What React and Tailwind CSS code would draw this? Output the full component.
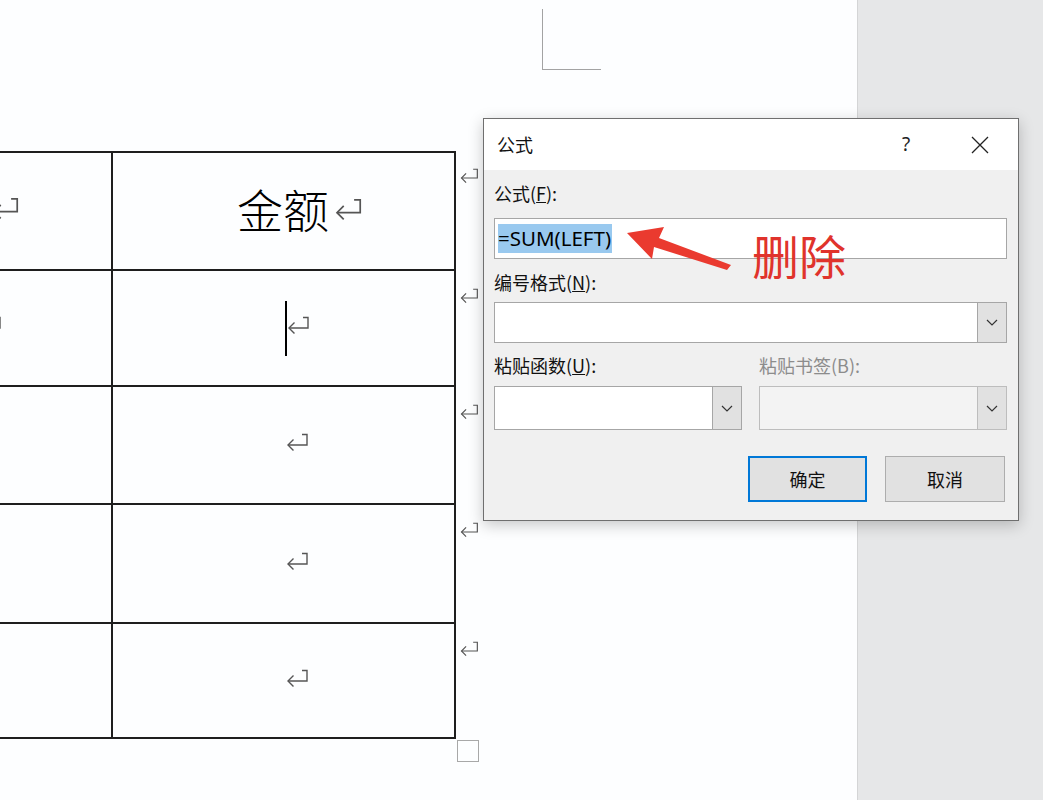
import React from "react";

const cjk = { fontFamily: "'Noto Sans CJK SC', 'Noto Sans', sans-serif" };
const ui = { fontFamily: "'Noto Sans', 'Noto Sans CJK SC', sans-serif" };

// Word paragraph mark
const Mark = ({ w = 24, h = 18, className = "" }) => (
  <svg width={w} height={h} viewBox="0 0 24 18" className={`shrink-0 ${className}`}>
    <path d="M17 1.5 H22 V12 H3" fill="none" stroke="#555" strokeWidth="1.4" />
    <path d="M8.5 6.5 L3 12 L8.5 17.5" fill="none" stroke="#555" strokeWidth="1.4" />
  </svg>
);

const Chevron = () => (
  <svg width="12" height="7" viewBox="0 0 12 7">
    <path d="M1 1 L6 6 L11 1" fill="none" stroke="#333" strokeWidth="1.2" />
  </svg>
);

const Select = ({ disabled = false }) => (
  <div className={`h-full flex border ${disabled ? "border-[#bdbdbd] bg-[#f3f3f3]" : "border-[#a6a6a6] bg-white"}`}>
    <div className="flex-1" />
    <div className={`w-[29px] flex items-center justify-center border-l bg-[#e1e1e1] ${disabled ? "border-[#bdbdbd]" : "border-[#a6a6a6]"}`}>
      <Chevron />
    </div>
  </div>
);

const rows = [
  { h: "h-[116px]" },
  { h: "h-[118px]" },
  { h: "h-[119px]" },
  { h: "h-[115px]" },
];

export default function App() {
  return (
    <div className="relative w-[1043px] h-[800px] flex overflow-hidden bg-white" style={cjk}>
      {/* document page */}
      <div className="w-[857px] h-full bg-[#fdfeff] flex flex-col">
        <div className="ml-[542px] mt-[9px] w-[59px] h-[61px] border-l border-b border-[#a3a3a3]" />

        <div className="mt-[81px] flex flex-col">
          {/* header row */}
          <div className="flex items-start">
            <div className="w-[456px] h-[120px] flex border-t-2 border-b-2 border-r-2 border-[#1e1e1e]">
              <div className="w-[113px] h-full border-r-2 border-[#1e1e1e] overflow-hidden flex items-center pb-[6px]">
                <Mark w={30} h={22} className="-ml-[10px]" />
              </div>
              <div className="flex-1 flex items-center pl-[124px] pb-[6px]">
                <span className="text-[46px] leading-none text-black font-light">金额</span>
                <Mark w={30} h={22} className="ml-[4px] mt-[2px]" />
              </div>
            </div>
            <Mark w={20} h={15} className="mt-[17px] ml-[3px]" />
          </div>

          {rows.map((r, i) => (
            <div key={i} className="flex items-start">
              <div className={`w-[456px] ${r.h} flex border-b-2 border-r-2 border-[#1e1e1e]`}>
                <div className="w-[113px] h-full border-r-2 border-[#1e1e1e] overflow-hidden flex items-center pb-[6px]">
                  {i === 0 && <Mark className="-ml-[22px]" />}
                </div>
                <div className="flex-1 flex items-center pl-[172px] pb-[6px]">
                  {i === 0 && <div className="w-[2px] h-[55px] bg-black mt-[6px]" />}
                  <Mark className={i === 0 ? "-ml-[1px]" : ""} />
                </div>
              </div>
              <Mark w={20} h={15} className="mt-[17px] ml-[3px]" />
            </div>
          ))}

          <div className="ml-[457px] mt-[1px] w-[22px] h-[22px] border border-[#a8a8a8]" />
        </div>
      </div>

      {/* gray margin */}
      <div className="flex-1 h-full bg-[#e6e7e8] border-l border-[#d4d5d6]" />

      {/* formula dialog */}
      <div className="absolute left-[483px] top-[118px] w-[536px] h-[403px] border border-[#6f6f6f] bg-[#f0f0f0] flex flex-col shadow-[0_4px_14px_rgba(0,0,0,0.22)]">
        <div className="h-[51px] bg-white flex items-center pl-[13px] pr-[15px]">
          <span className="text-[18px] text-[#111]">公式</span>
          <div className="flex-1" />
          <div className="w-[46px] flex justify-center text-[19px] text-[#222]" style={ui}>?</div>
          <div className="w-[46px] ml-[28px] flex justify-center">
            <svg width="18" height="18" viewBox="0 0 18 18">
              <path d="M1 1 L17 17 M17 1 L1 17" stroke="#222" strokeWidth="1.3" />
            </svg>
          </div>
        </div>

        <div className="flex-1 flex flex-col pl-[10px] pr-[11px] text-[18px] text-[#111]">
          <div className="mt-[12px] h-[22px] leading-[22px]">
            公式(<span className="underline">F</span>):
          </div>
          <div className="mt-[14px] h-[41px] border border-[#a6a6a6] bg-white flex items-center">
            <span className="ml-[3px] bg-[#99c9ef] text-[20.5px] leading-[29px] text-black pr-[1px]" style={ui}>
              =SUM(LEFT)
            </span>
          </div>

          <div className="mt-[12px] h-[22px] leading-[22px]">
            编号格式(<span className="underline">N</span>):
          </div>
          <div className="mt-[9px] h-[41px]">
            <Select />
          </div>

          <div className="mt-[11px] grid grid-cols-2 gap-x-[17px]">
            <div className="h-[22px] leading-[22px]">
              粘贴函数(<span className="underline">U</span>):
            </div>
            <div className="h-[22px] leading-[22px] text-[#8c8c8c]">粘贴书签(B):</div>
            <div className="mt-[10px] h-[44px]">
              <Select />
            </div>
            <div className="mt-[10px] h-[44px]">
              <Select disabled />
            </div>
          </div>

          <div className="mt-[26px] flex justify-end gap-[18px] pr-[2px]">
            <div className="w-[119px] h-[46px] border-2 border-[#0078d7] bg-[#e1e1e1] flex items-center justify-center">
              确定
            </div>
            <div className="w-[120px] h-[46px] border border-[#adadad] bg-[#e1e1e1] flex items-center justify-center">
              取消
            </div>
          </div>
        </div>
      </div>

      {/* red annotation */}
      <svg className="absolute left-0 top-0 pointer-events-none" width="1043" height="800">
        <polygon
          points="627,233 664,227 659,238 731,265 727,270 654,247 652,259"
          fill="#ea3a2f"
        />
      </svg>
      <div className="absolute left-[752px] top-[231px] text-[47px] leading-none text-[#e0332c]">
        删除
      </div>
    </div>
  );
}
